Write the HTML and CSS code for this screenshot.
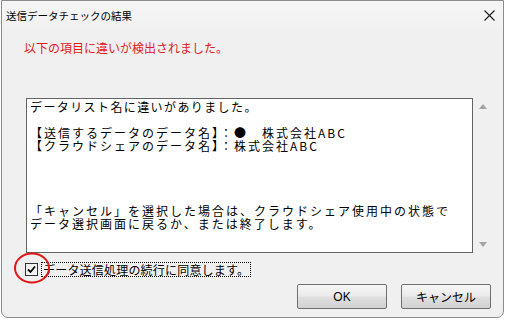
FILE: index.html
```html
<!DOCTYPE html>
<html lang="ja">
<head>
    <meta charset="UTF-8">
    <title>送信データチェックの結果</title>
    <link rel="stylesheet" href="styles.css">
</head>
<body>
    <div class="window">
        <div class="titlebar">
            <span class="title">送信データチェックの結果</span>
            <svg class="close" width="11" height="11" viewBox="0 0 11 11">
                <path d="M0.5 0.5 L10.5 10.5 M10.5 0.5 L0.5 10.5" stroke="#1a1a1a" stroke-width="1.1" fill="none"/>
            </svg>
        </div>

        <p class="message">以下の項目に違いが検出されました。</p>

        <div class="list-row">
            <div class="list-box">
                <div class="line wide">データリスト名に違いがありました。</div>
                <div class="line">&nbsp;</div>
                <div class="line">【送信するデータのデータ名】：●　株式会社ABC</div>
                <div class="line">【クラウドシェアのデータ名】：株式会社ABC</div>
                <div class="line">&nbsp;</div>
                <div class="line">&nbsp;</div>
                <div class="line">&nbsp;</div>
                <div class="line">&nbsp;</div>
                <div class="line">「キャンセル」を選択した場合は、クラウドシェア使用中の状態で</div>
                <div class="line">データ選択画面に戻るか、または終了します。</div>
            </div>
            <div class="scrollbar">
                <span class="arrow up"></span>
                <span class="arrow down"></span>
            </div>
        </div>

        <div class="check-row">
            <span class="checkbox">
                <svg width="9" height="9" viewBox="0 0 9 9">
                    <path d="M1 4.5 L3.5 7 L8 1.5" stroke="#000" stroke-width="1.8" fill="none"/>
                </svg>
            </span>
            <span class="check-label">データ送信処理の続行に同意します。</span>
        </div>

        <div class="buttons">
            <button type="button" class="btn">OK</button>
            <button type="button" class="btn">キャンセル</button>
        </div>

        <svg class="mark" width="40" height="34" viewBox="0 0 40 34">
            <ellipse cx="19" cy="16" rx="17" ry="14.5" stroke="#e01818" stroke-width="2" fill="none"/>
        </svg>
    </div>
</body>
</html>
```

FILE: styles.css
```css
body {
    margin: 0;
    background-color: #ffffff;
    font-family: "Noto Sans CJK JP", "Noto Sans", sans-serif;
    color: #000;
}

.window {
    position: relative;
    width: 503px;
    height: 318px;
    margin-left: 1px;
    box-sizing: border-box;
    border: 1px solid #8c8c8c;
    border-radius: 0 0 7px 7px;
    background-color: #f0f0f0;
    overflow: hidden;
}

.titlebar {
    height: 30px;
    display: flex;
    align-items: center;
    justify-content: space-between;
    padding: 0 8px 0 4px;
    background: linear-gradient(#f5f5f5, #f1f1f1);
}

.title {
    font-size: 10.5px;
    line-height: 12px;
    margin-top: -1px;
}

.close {
    display: block;
    margin-top: -2px;
}

.message {
    margin: 9px 0 0 22px;
    font-size: 12px;
    line-height: 16px;
    color: #e41b1b;
}

.list-row {
    display: flex;
    margin: 42px 0 0 24px;
}

.list-box {
    width: 447px;
    height: 155px;
    box-sizing: border-box;
    border: 1px solid #646464;
    background-color: #fff;
    padding: 1px 0 0 3px;
    font-size: 12px;
    letter-spacing: 2px;
    overflow: hidden;
}

.line {
    height: 13px;
    line-height: 13px;
    white-space: nowrap;
}

.line.wide {
    letter-spacing: 1.4px;
}

.scrollbar {
    width: 20px;
    display: flex;
    flex-direction: column;
    justify-content: space-between;
    align-items: center;
    padding: 6px 0 6px 0;
}

.arrow {
    width: 0;
    height: 0;
    border-left: 4px solid transparent;
    border-right: 4px solid transparent;
}

.arrow.up {
    border-bottom: 5px solid #a3a3a3;
}

.arrow.down {
    border-top: 5px solid #a3a3a3;
}

.check-row {
    display: flex;
    align-items: center;
    margin: 8px 0 0 23px;
    height: 16px;
}

.checkbox {
    width: 13px;
    height: 13px;
    box-sizing: border-box;
    border: 1px solid #333;
    background-color: #f4f4f4;
    display: flex;
    align-items: center;
    justify-content: center;
}

.check-label {
    margin-left: 3px;
    padding: 0 1px;
    border: 1px dotted #000;
    font-size: 12px;
    line-height: 13px;
    letter-spacing: 0.2px;
}

.buttons {
    display: flex;
    justify-content: flex-end;
    gap: 14px;
    margin: 7px 12px 0 0;
}

.btn {
    width: 90px;
    height: 25px;
    border: 1px solid #707070;
    border-radius: 2px;
    background: linear-gradient(#f6f6f6, #ececec 45%, #dedede 55%, #d2d2d2);
    font-family: "Liberation Sans", "Noto Sans CJK JP", sans-serif;
    font-size: 12px;
    color: #000;
    padding: 0;
}

.mark {
    position: absolute;
    left: 11px;
    top: 251px;
}
```
